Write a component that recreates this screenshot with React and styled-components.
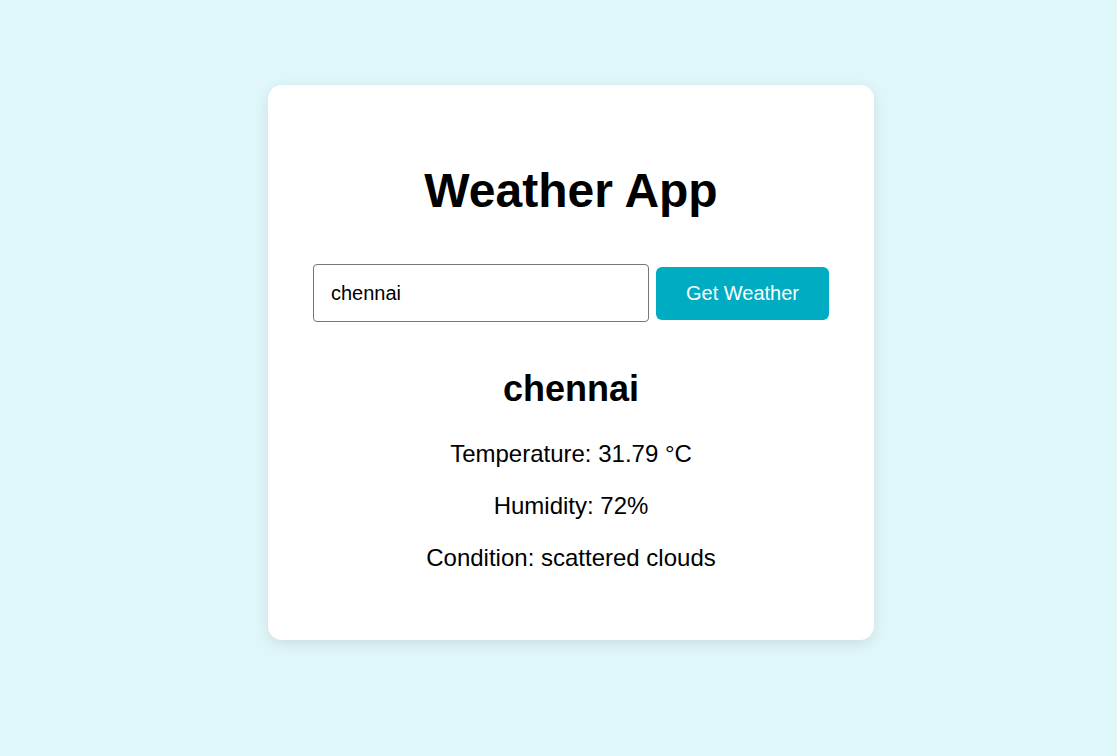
import React, { useState } from 'react';
import styled, { createGlobalStyle } from 'styled-components';

const GlobalStyle = createGlobalStyle`
  html, body {
    margin: 0;
    padding: 0;
    background: #e0f7fa;
    font-family: "Liberation Sans", Arial, sans-serif;
  }
`;

const Page = styled.div`
  min-height: 756px;
  display: flex;
  justify-content: center;
  align-items: flex-start;
  padding: 85px 0 0 25px;
  box-sizing: border-box;
`;

const Card = styled.div`
  width: 606px;
  box-sizing: border-box;
  background: #ffffff;
  border-radius: 14px;
  padding: 40px 45px 44px;
  box-shadow: 0 4px 14px rgba(0, 0, 0, 0.1);
  text-align: center;
`;

const Title = styled.h1`
  font-size: 48px;
  font-weight: bold;
  color: #000;
  margin: 38px 0 46px;
`;

const SearchRow = styled.div`
  display: flex;
  align-items: center;
  justify-content: center;
  gap: 7px;
  margin-bottom: 46px;
`;

const CityInput = styled.input`
  width: 336px;
  height: 58px;
  box-sizing: border-box;
  padding: 0 17px;
  font-size: 20px;
  font-family: "Liberation Sans", Arial, sans-serif;
  color: #000;
  border: 1px solid #767676;
  border-radius: 4px;
  outline: none;
`;

const Button = styled.button`
  width: 173px;
  height: 53px;
  background: #00acc1;
  color: #ffffff;
  border: none;
  border-radius: 6px;
  font-size: 20px;
  font-family: "Liberation Sans", Arial, sans-serif;
  cursor: pointer;
`;

const Result = styled.div`
  color: #000;
`;

const City = styled.h2`
  font-size: 36px;
  font-weight: bold;
  margin: 30px 0;
`;

const Info = styled.p`
  font-size: 24px;
  margin: 24px 0;
`;

export default function App() {
  const [city, setCity] = useState('chennai');
  const weather = {
    name: 'chennai',
    temp: 31.79,
    humidity: 72,
    condition: 'scattered clouds',
  };

  return (
    <>
      <GlobalStyle />
      <Page>
        <Card>
          <Title>Weather App</Title>
          <SearchRow>
            <CityInput value={city} onChange={(e) => setCity(e.target.value)} />
            <Button>Get Weather</Button>
          </SearchRow>
          <Result>
            <City>{weather.name}</City>
            <Info>Temperature: {weather.temp} °C</Info>
            <Info>Humidity: {weather.humidity}%</Info>
            <Info>Condition: {weather.condition}</Info>
          </Result>
        </Card>
      </Page>
    </>
  );
}
